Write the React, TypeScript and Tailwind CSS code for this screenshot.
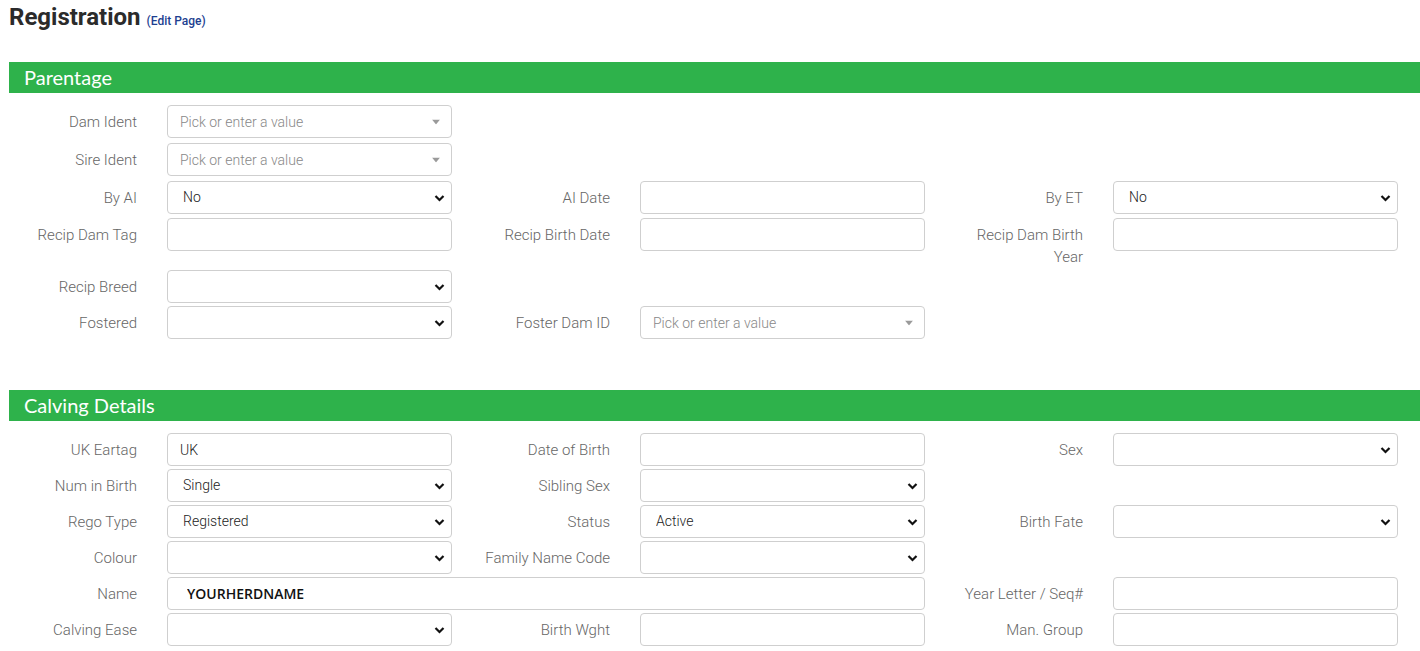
const Chevron = () => (
  <svg
    className="pointer-events-none absolute right-[7px] top-1/2 -translate-y-1/2"
    width="11"
    height="8"
    viewBox="0 0 11 8"
  >
    <polyline points="1.5,2 5.5,6 9.5,2" fill="none" stroke="#111" strokeWidth="2.2" />
  </svg>
);

const Caret = () => (
  <svg
    className="pointer-events-none absolute right-[11px] top-1/2 -translate-y-1/2"
    width="8"
    height="5"
    viewBox="0 0 8 5"
  >
    <polygon points="0,0 8,0 4,5" fill="#9a9a9a" />
  </svg>
);

type Field = {
  label: string;
  kind: "text" | "select" | "combo";
  value?: string;
  wide?: boolean;
  bold?: boolean;
};

const Control = ({ f }: { f: Field }) => {
  const w = f.wide ? "w-[758px]" : "w-[285px]";
  if (f.kind === "combo") {
    return (
      <div className={`relative h-[33px] ${w} rounded-[4px] border border-[#cfcfcf] bg-white`}>
        <span className="absolute left-[12px] top-[6px] text-[14px] font-light text-[#888]">
          Pick or enter a value
        </span>
        <Caret />
      </div>
    );
  }
  if (f.kind === "select") {
    return (
      <div className={`relative h-[33px] ${w}`}>
        <select
          defaultValue={f.value ?? ""}
          className="h-full w-full appearance-none rounded-[4px] border border-[#cfcfcf] bg-white pl-[15px] text-[14px] font-light text-[#222] outline-none"
        >
          <option value={f.value ?? ""}>{f.value ?? ""}</option>
        </select>
        <Chevron />
      </div>
    );
  }
  return (
    <input
      readOnly
      value={f.value ?? ""}
      className={`h-[33px] ${w} rounded-[4px] border border-[#cfcfcf] bg-white outline-none ${
        f.bold
          ? "pl-[19px] font-['Open_Sans',sans-serif] text-[14px] font-semibold text-[#111]"
          : "pl-[12px] text-[14px] font-light text-[#222]"
      }`}
    />
  );
};

const Cell = ({ f }: { f?: Field }) => {
  if (!f) return <div />;
  return (
    <div className={`flex items-start ${f.wide ? "col-span-2" : ""}`}>
      <label className="w-[128px] shrink-0 pt-[6px] text-right text-[15px] font-light leading-[22px] text-[#666]">
        {f.label}
      </label>
      <div className="ml-[30px]">
        <Control f={f} />
      </div>
    </div>
  );
};

const Row = ({ cells, gap }: { cells: (Field | undefined)[]; gap: string }) => (
  <div className={`grid grid-cols-[473px_473px_473px] ${gap}`}>
    {cells.map((c, i) => (
      <Cell key={i} f={c} />
    ))}
  </div>
);

const Bar = ({ title }: { title: string }) => (
  <div className="h-[31px] bg-[#2eb24b] pl-[15px] font-['Lato',sans-serif] text-[20px] font-normal leading-[31px] text-white">
    {title}
  </div>
);

export default function App() {
  return (
    <div className="min-h-[651px] bg-white pl-[9px] font-['Roboto',sans-serif]">
      <div className="flex items-baseline pt-[2px]">
        <h1 className="text-[24px] font-bold leading-[30px] text-[#2b2b2b]">Registration</h1>
        <a className="ml-[6px] text-[12px] font-medium text-[#1d3f91]">(Edit Page)</a>
      </div>

      <div className="mt-[30px]">
        <Bar title="Parentage" />
        <div className="pt-[12px]">
          <Row gap="mb-[5px]" cells={[{ label: "Dam Ident", kind: "combo" }]} />
          <Row gap="mb-[5px]" cells={[{ label: "Sire Ident", kind: "combo" }]} />
          <Row
            gap="mb-[4px]"
            cells={[
              { label: "By AI", kind: "select", value: "No" },
              { label: "AI Date", kind: "text" },
              { label: "By ET", kind: "select", value: "No" },
            ]}
          />
          <Row
            gap="mb-[2px]"
            cells={[
              { label: "Recip Dam Tag", kind: "text" },
              { label: "Recip Birth Date", kind: "text" },
              { label: "Recip Dam Birth Year", kind: "text" },
            ]}
          />
          <Row gap="mb-[3px]" cells={[{ label: "Recip Breed", kind: "select" }]} />
          <Row
            gap="mb-[3px]"
            cells={[
              { label: "Fostered", kind: "select" },
              { label: "Foster Dam ID", kind: "combo" },
            ]}
          />
        </div>
      </div>

      <div className="mt-[51px]">
        <Bar title="Calving Details" />
        <div className="pt-[12px]">
          <Row
            gap="mb-[3px]"
            cells={[
              { label: "UK Eartag", kind: "text", value: "UK" },
              { label: "Date of Birth", kind: "text" },
              { label: "Sex", kind: "select" },
            ]}
          />
          <Row
            gap="mb-[3px]"
            cells={[
              { label: "Num in Birth", kind: "select", value: "Single" },
              { label: "Sibling Sex", kind: "select" },
            ]}
          />
          <Row
            gap="mb-[3px]"
            cells={[
              { label: "Rego Type", kind: "select", value: "Registered" },
              { label: "Status", kind: "select", value: "Active" },
              { label: "Birth Fate", kind: "select" },
            ]}
          />
          <Row
            gap="mb-[3px]"
            cells={[
              { label: "Colour", kind: "select" },
              { label: "Family Name Code", kind: "select" },
            ]}
          />
          <div className="mb-[3px] grid grid-cols-[473px_473px_473px]">
            <Cell f={{ label: "Name", kind: "text", value: "YOURHERDNAME", wide: true, bold: true }} />
            <Cell f={{ label: "Year Letter / Seq#", kind: "text" }} />
          </div>
          <Row
            gap="mb-[3px]"
            cells={[
              { label: "Calving Ease", kind: "select" },
              { label: "Birth Wght", kind: "text" },
              { label: "Man. Group", kind: "text" },
            ]}
          />
        </div>
      </div>
    </div>
  );
}
